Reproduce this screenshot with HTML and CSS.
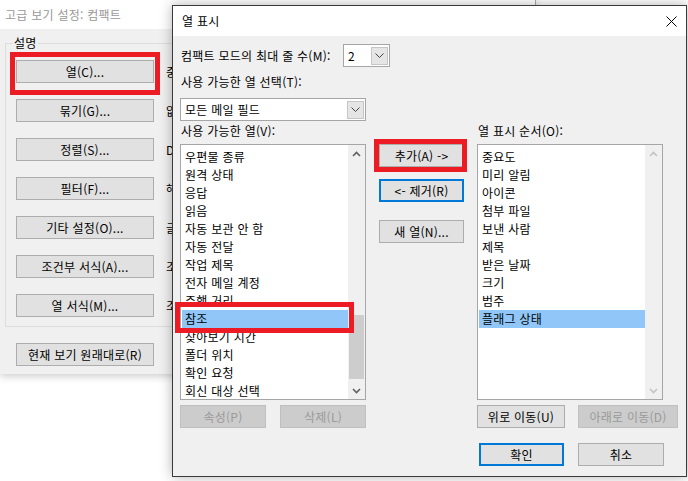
FILE: index.html
```html
<!DOCTYPE html>
<html lang="ko">
<head>
<meta charset="utf-8">
<title>열 표시</title>
<link rel="stylesheet" href="styles.css">
</head>
<body>
<div class="desktop">
  <section class="win win-back">
    <header class="back-title">고급 보기 설정: 컴팩트</header>
    <div class="back-body">
      <div class="group">
        <span class="legend">설명</span>
        <div class="opt-row"><button class="btn opt-btn">열(C)...</button><span class="opt-val">중</span></div>
        <div class="opt-row"><button class="btn opt-btn">묶기(G)...</button><span class="opt-val">없</span></div>
        <div class="opt-row"><button class="btn opt-btn">정렬(S)...</button><span class="opt-val">D</span></div>
        <div class="opt-row"><button class="btn opt-btn">필터(F)...</button><span class="opt-val">해</span></div>
        <div class="opt-row"><button class="btn opt-btn">기타 설정(O)...</button><span class="opt-val">글</span></div>
        <div class="opt-row"><button class="btn opt-btn">조건부 서식(A)...</button><span class="opt-val">조</span></div>
        <div class="opt-row"><button class="btn opt-btn">열 서식(M)...</button><span class="opt-val">조</span></div>
      </div>
      <button class="btn reset">현재 보기 원래대로(R)</button>
    </div>
  </section>

  <div class="mark mark-col"></div>

  <section class="win win-front">
    <header class="front-title">
      <span>열 표시</span>
      <svg class="close" width="11" height="11" viewBox="0 0 11 11"><path d="M0.5 0.5L10.5 10.5M10.5 0.5L0.5 10.5" stroke="#000" stroke-width="1" fill="none"/></svg>
    </header>
    <div class="front-body">
      <div class="row-max">
        <label class="max-label">컴팩트 모드의 최대 줄 수(M):</label>
        <div class="combo combo-small">
          <span>2</span>
          <span class="drop"><svg width="9" height="5" viewBox="0 0 9 5"><path d="M0.5 0.5L4.5 4.5L8.5 0.5" stroke="#444" fill="none"/></svg></span>
        </div>
      </div>
      <label class="lbl-select">사용 가능한 열 선택(T):</label>
      <div class="combo combo-wide">
        <span>모든 메일 필드</span>
        <span class="drop"><svg width="9" height="5" viewBox="0 0 9 5"><path d="M0.5 0.5L4.5 4.5L8.5 0.5" stroke="#444" fill="none"/></svg></span>
      </div>

      <div class="columns">
        <div class="col col-avail">
          <div class="col-label">사용 가능한 열(V):</div>
          <div class="listbox">
            <ul class="items">
              <li>우편물 종류</li>
              <li>원격 상태</li>
              <li>응답</li>
              <li>읽음</li>
              <li>자동 보관 안 함</li>
              <li>자동 전달</li>
              <li>작업 제목</li>
              <li>전자 메일 계정</li>
              <li>주행 거리</li>
              <li class="sel">참조</li>
              <li>찾아보기 시간</li>
              <li>폴더 위치</li>
              <li>확인 요청</li>
              <li>회신 대상 선택</li>
            </ul>
            <div class="vscroll">
              <span class="arrow"><svg width="9" height="6" viewBox="0 0 9 6"><path d="M1 5L4.5 1.5L8 5" stroke="#606060" stroke-width="1.6" fill="none"/></svg></span>
              <span class="thumb"></span>
              <span class="arrow"><svg width="9" height="6" viewBox="0 0 9 6"><path d="M1 1L4.5 4.5L8 1" stroke="#606060" stroke-width="1.6" fill="none"/></svg></span>
            </div>
          </div>
          <div class="btn-pair">
            <button class="btn w86" disabled>속성(P)</button>
            <button class="btn w86" disabled>삭제(L)</button>
          </div>
        </div>

        <div class="col col-mid">
          <button class="btn mid-btn">추가(A) -&gt;</button>
          <button class="btn mid-btn focus remove">&lt;- 제거(R)</button>
          <button class="btn mid-btn newcol">새 열(N)...</button>
        </div>

        <div class="col col-order">
          <div class="col-label">열 표시 순서(O):</div>
          <div class="listbox">
            <ul class="items">
              <li>중요도</li>
              <li>미리 알림</li>
              <li>아이콘</li>
              <li>첨부 파일</li>
              <li>보낸 사람</li>
              <li>제목</li>
              <li>받은 날짜</li>
              <li>크기</li>
              <li>범주</li>
              <li class="sel">플래그 상태</li>
            </ul>
            <div class="vscroll">
              <span class="arrow"><svg width="9" height="6" viewBox="0 0 9 6"><path d="M1 5L4.5 1.5L8 5" stroke="#c2c2c2" stroke-width="1.6" fill="none"/></svg></span>
              <span class="track"></span>
              <span class="arrow"><svg width="9" height="6" viewBox="0 0 9 6"><path d="M1 1L4.5 4.5L8 1" stroke="#c2c2c2" stroke-width="1.6" fill="none"/></svg></span>
            </div>
          </div>
          <div class="btn-pair">
            <button class="btn w88">위로 이동(U)</button>
            <button class="btn w100" disabled>아래로 이동(D)</button>
          </div>
        </div>
      </div>

      <div class="footer">
        <button class="btn focus w85">확인</button>
        <button class="btn w86">취소</button>
      </div>
    </div>
  </section>

  <div class="mark mark-add"></div>
  <div class="mark mark-ref"></div>
</div>
</body>
</html>
```

FILE: styles.css
```css
* {
  box-sizing: border-box;
  margin: 0;
  padding: 0;
}

html,
body {
  width: 688px;
  height: 481px;
  overflow: hidden;
  background: #fff;
}

body {
  font-family: "Noto Sans CJK KR", "Malgun Gothic", sans-serif;
  font-size: 12px;
  line-height: 16px;
  letter-spacing: 0.25px;
  color: #000;
}

.desktop {
  position: relative;
  width: 688px;
  height: 481px;
  background: #fff;
  overflow: hidden;
}

.win {
  position: absolute;
}

/* ---------- back window ---------- */
.win-back {
  left: 0;
  top: 0;
  width: 536px;
  height: 374px;
  background: #f0f0f0;
  border-right: 1px solid #ababab;
  box-shadow: 0 2px 8px rgba(0, 0, 0, 0.22);
}

.back-title {
  height: 29px;
  background: #fff;
  color: #999;
  padding-left: 5px;
  display: flex;
  align-items: center;
}

.back-body {
  padding: 14px 0 0 5px;
}

.group {
  position: relative;
  width: 525px;
  height: 284px;
  border: 1px solid #dcdcdc;
  padding: 16px 0 0 10px;
  display: flex;
  flex-direction: column;
  gap: 16px;
}

.legend {
  position: absolute;
  left: 7px;
  top: -9px;
  padding: 0 1px;
  background: #f0f0f0;
}

.opt-row {
  display: flex;
  align-items: center;
  gap: 12px;
  height: 23px;
}

.opt-val {
  white-space: nowrap;
}

.btn {
  font: inherit;
  letter-spacing: inherit;
  color: #000;
  height: 23px;
  background: #e1e1e1;
  border: 1px solid #adadad;
  display: flex;
  align-items: center;
  justify-content: center;
  white-space: nowrap;
}

.btn:disabled {
  background: #cccccc;
  border-color: #bfbfbf;
  color: #9a9a9a;
}

.btn.focus {
  border: 2px solid #0078d7;
}

.opt-btn {
  width: 138px;
}

.reset {
  width: 138px;
  margin: 16px 0 0 11px;
}

/* ---------- front window ---------- */
.win-front {
  left: 172px;
  top: 5px;
  width: 515px;
  height: 472px;
  background: #f0f0f0;
  border: 1px solid #3a3a3a;
  box-shadow: 0 0 12px rgba(0, 0, 0, 0.3);
}

.front-title {
  height: 30px;
  background: #fff;
  display: flex;
  align-items: center;
  justify-content: space-between;
  padding: 0 9px 0 9px;
}

.front-body {
  padding: 8px 7px 0 7px;
}

.row-max {
  display: flex;
  align-items: center;
  height: 23px;
}

.max-label {
  width: 163px;
  padding-left: 1px;
  white-space: nowrap;
}

.combo {
  height: 23px;
  background: #fff;
  border: 1px solid #a6a6a6;
  display: flex;
  align-items: center;
  justify-content: space-between;
  padding: 2px 1px 2px 4px;
}

.combo-small {
  width: 47px;
}

.combo-wide {
  width: 186px;
  margin-top: 8px;
  padding-right: 1px;
}

.drop {
  width: 17px;
  height: 18px;
  background: #e5e5e5;
  border: 1px solid #c6c6c6;
  display: flex;
  align-items: center;
  justify-content: center;
}

.lbl-select {
  display: block;
  margin-top: 7px;
  padding-left: 1px;
}

.columns {
  display: flex;
  gap: 13px;
  margin-top: 2px;
}

.col {
  display: flex;
  flex-direction: column;
}

.col-avail {
  width: 186px;
}

.col-mid {
  width: 85px;
  padding-top: 21px;
}

.col-order {
  width: 201px;
}

.col-label {
  height: 16px;
  margin-bottom: 5px;
  padding-left: 1px;
  white-space: nowrap;
}

.listbox {
  width: 186px;
  height: 256px;
  border: 1px solid #a6a6a6;
  background: #fff;
  display: flex;
}

.items {
  flex: 1;
  list-style: none;
  padding-top: 3px;
  overflow: hidden;
}

.items li {
  height: 18px;
  line-height: 18px;
  padding-left: 3px;
  margin-left: 1px;
  white-space: nowrap;
}

.items li.sel {
  background: #90c6f8;
}

.vscroll {
  width: 17px;
  background: #f0f0f0;
  display: flex;
  flex-direction: column;
}

.arrow {
  height: 17px;
  display: flex;
  align-items: center;
  justify-content: center;
}

.thumb {
  margin: auto 1px 3px;
  height: 64px;
  background: #cdcdcd;
}

.track {
  flex: 1;
}

.btn-pair {
  display: flex;
  justify-content: space-between;
  margin-top: 5px;
}

.w85 { width: 85px; }
.w86 { width: 86px; }
.w88 { width: 88px; }
.w100 { width: 100px; }

.mid-btn {
  width: 85px;
}

.remove {
  margin-top: 12px;
}

.newcol {
  margin-top: 18px;
}

.footer {
  display: flex;
  justify-content: flex-end;
  gap: 14px;
  margin-top: 15px;
  padding-right: 15px;
}

/* ---------- red annotation boxes ---------- */
.mark {
  position: absolute;
  border: 5px solid #ed1c24;
}

.mark-col {
  left: 10px;
  top: 52px;
  width: 150px;
  height: 43px;
}

.mark-add {
  left: 374px;
  top: 139px;
  width: 93px;
  height: 33px;
}

.mark-ref {
  left: 175px;
  top: 302px;
  width: 179px;
  height: 31px;
}
```
